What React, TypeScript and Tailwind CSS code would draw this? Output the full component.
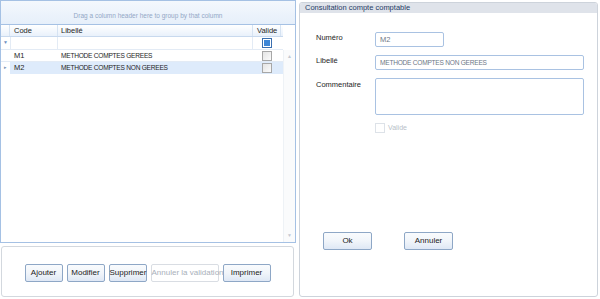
import React from "react";

const font = { fontFamily: '"Liberation Sans", Arial, sans-serif' };

function Btn({ label, w, disabled }: { label: string; w: string; disabled?: boolean }) {
  return (
    <button
      className={`${w} h-[18px] whitespace-nowrap rounded-[2px] border text-[8px] leading-none ${
        disabled
          ? "border-[#d9dde3] bg-white text-[#a9b0ba]"
          : "border-[#8ea7c6] bg-gradient-to-b from-[#f9fbfd] via-[#f1f5fa] to-[#dfe8f5] text-[#1b1b1b]"
      }`}
    >
      {label}
    </button>
  );
}

function Check({ active, faded }: { active?: boolean; faded?: boolean }) {
  if (active)
    return (
      <div className="flex h-[10px] w-[10px] items-center justify-center border border-[#3a6fb0] bg-white">
        <div className="h-[6px] w-[6px] bg-[#3d86d6]" />
      </div>
    );
  return (
    <div
      className={`h-[10px] w-[10px] border ${
        faded ? "border-[#dde2e8] bg-white" : "border-[#a7a7a7] bg-gradient-to-br from-[#e4e4e4] to-[#fbfbfb]"
      }`}
    />
  );
}

const caps = "text-[6.6px] tracking-[-0.25px]";

export default function App() {
  return (
    <div className="flex h-[299px] w-[600px] overflow-hidden bg-white text-[#1e1e1e]" style={font}>
      {/* left side */}
      <div className="flex w-[296px] flex-col">
        <div className="flex h-[243px] flex-col border border-[#a5c1e4] bg-white">
          <div className="flex h-[24px] items-center justify-center border-b border-[#a5c1e4] bg-gradient-to-b from-[#f4f8fd] to-[#e6effa] pt-[6px] text-[6.5px] text-[#93a8c6]">
            Drag a column header here to group by that column
          </div>
          <div className="flex min-h-0 flex-1">
            <div className="flex flex-1 flex-col">
              <div className="flex h-[12px] border-b border-[#c8d9ee] bg-gradient-to-b from-[#ffffff] to-[#e9f1fb] text-[7.5px] leading-[12px]">
                <div className="w-[9px] border-r border-[#d6e3f2]" />
                <div className="w-[48px] border-r border-[#d6e3f2] pl-[4px]">Code</div>
                <div className="w-[195px] border-r border-[#d6e3f2] pl-[3px]">Libellé</div>
                <div className="w-[28px] border-r border-[#d6e3f2] pl-[4px]">Valide</div>
                <div className="flex-1" />
              </div>
              <div className="flex h-[13px] items-center border-b border-[#e3ebf5] text-[7.5px]">
                <div className="flex w-[9px] justify-center text-[5px] text-[#6d8fbf]">▼</div>
                <div className="h-full w-[48px] border-x border-[#e3ebf5]" />
                <div className="h-full w-[195px] border-r border-[#e3ebf5]" />
                <div className="flex h-full w-[28px] items-center justify-center">
                  <Check active />
                </div>
              </div>
              <div className="flex h-[12px] items-center border-b border-[#e3ebf5] text-[7.5px]">
                <div className="w-[9px]" />
                <div className="w-[48px] pl-[4px]">M1</div>
                <div className={`w-[195px] pl-[3px] ${caps}`}>METHODE COMPTES GEREES</div>
                <div className="flex w-[28px] justify-center">
                  <Check />
                </div>
              </div>
              <div className="flex h-[12px] items-center bg-[#deebfb] text-[7.5px]">
                <div className="flex h-full w-[9px] items-center justify-center bg-white text-[5px] text-[#7d96b8]">▸</div>
                <div className="w-[48px] pl-[4px]">M2</div>
                <div className={`w-[195px] pl-[3px] ${caps}`}>METHODE COMPTES NON GEREES</div>
                <div className="flex w-[28px] justify-center">
                  <Check />
                </div>
              </div>
            </div>
            {/* scrollbar */}
            <div className="mt-[25px] flex w-[12px] flex-col items-center justify-between border-l border-[#eef2f6] bg-[#fafbfc] py-[3px] text-[5px] text-[#c3c9d1]">
              <span>▲</span>
              <span>▼</span>
            </div>
          </div>
        </div>
        <div className="mt-[3px] mb-[2px] ml-[1px] mr-[2px] flex flex-1 items-center justify-center gap-[4px] rounded-[3px] border border-[#d3d8de] pt-[2px]">
          <Btn label="Ajouter" w="w-[38px]" />
          <Btn label="Modifier" w="w-[38px]" />
          <Btn label="Supprimer" w="w-[38px]" />
          <Btn label="Annuler la validation" w="w-[68px] text-[6.5px]" disabled />
          <Btn label="Imprimer" w="w-[48px]" />
        </div>
      </div>

      {/* right side */}
      <div className="mt-[2px] mb-[2px] ml-[3px] mr-[2px] flex flex-1 flex-col overflow-hidden rounded-[3px] border border-[#cdd3db]">
        <div className="h-[10px] bg-[#dfe3ea] pl-[5px] text-[7.5px] leading-[10px] text-[#1f3c66]">
          Consultation compte comptable
        </div>
        <div className="flex flex-1 flex-col pl-[16px] pt-[19px] text-[7.5px]">
          <div className="flex items-start">
            <div className="w-[59px] pt-[0px]">Numéro</div>
            <div className="flex h-[15px] w-[69px] items-center rounded-[2px] border border-[#a9c2e2] pl-[4px] text-[#6e7785]">
              M2
            </div>
          </div>
          <div className="mt-[8px] flex items-start">
            <div className="w-[59px] pt-[0px]">Libellé</div>
            <div className={`flex h-[15px] w-[209px] items-center rounded-[2px] border border-[#a9c2e2] pl-[4px] text-[#6e7785] ${caps}`}>
              METHODE COMPTES NON GEREES
            </div>
          </div>
          <div className="mt-[8px] flex items-start">
            <div className="w-[59px] pt-[1px]">Commentaire</div>
            <div className="h-[37px] w-[209px] rounded-[2px] border border-[#a9c2e2]" />
          </div>
          <div className="mt-[8px] ml-[59px] flex items-center gap-[3px] text-[7px] text-[#b8bfc9]">
            <Check faded />
            <span>Valide</span>
          </div>
          <div className="mt-[98px] ml-[7px] flex gap-[32px]">
            <Btn label="Ok" w="w-[49px] h-[16px]" />
            <Btn label="Annuler" w="w-[49px] h-[16px]" />
          </div>
        </div>
      </div>
    </div>
  );
}
